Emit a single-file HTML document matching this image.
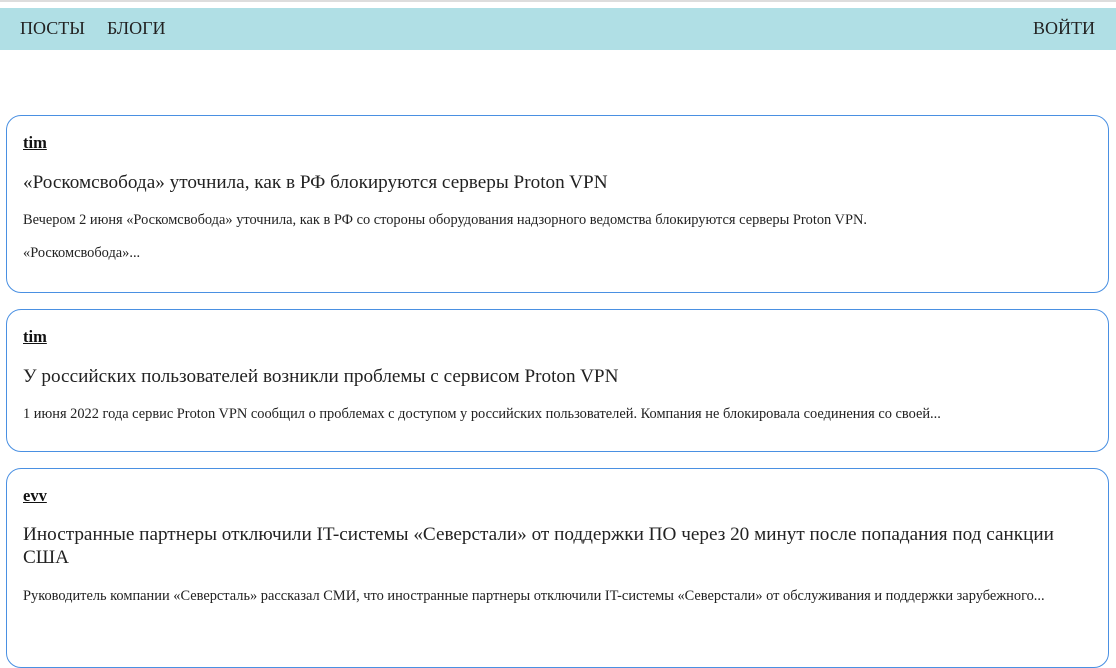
<!DOCTYPE html>
<html><head><meta charset="utf-8"><style>
html,body{margin:0;padding:0;background:#fff;width:1116px;height:626px;overflow:hidden;font-family:"Liberation Serif","Noto Serif CJK SC",serif;color:#222}
.top{position:absolute;left:0;top:0;width:1116px;height:2px;background:#ddd}
.nav{position:absolute;left:0;top:8px;width:1116px;height:42px;background:#b0dfe5}
.nav span{position:absolute;top:10px;font-size:18px;color:#222}
.card{position:absolute;left:6px;width:1103px;border:1px solid #4a90e2;border-radius:15px;box-sizing:border-box}
.card .u{position:absolute;left:16px;font-weight:bold;text-decoration:underline;font-size:16.5px;color:#111}
.card .t{position:absolute;left:16px;font-size:19.2px;line-height:23px;color:#222;width:1065px}
.card .b{position:absolute;left:16px;font-size:14.4px;color:#222}
</style></head><body>
<div class="top"></div>
<div class="nav"><span style="left:20px">ПОСТЫ</span><span style="left:107px">БЛОГИ</span><span style="left:1033px">ВОЙТИ</span></div>

<div class="card" style="top:115px;height:178px">
<div class="u" style="top:17px">tim</div>
<div class="t" style="top:55px">«Роскомсвобода» уточнила, как в РФ блокируются серверы Proton VPN</div>
<div class="b" style="top:96px">Вечером 2 июня «Роскомсвобода» уточнила, как в РФ со стороны оборудования надзорного ведомства блокируются серверы Proton VPN.</div>
<div class="b" style="top:129px">«Роскомсвобода»...</div>
</div>

<div class="card" style="top:309px;height:143px">
<div class="u" style="top:17px">tim</div>
<div class="t" style="top:55px">У российских пользователей возникли проблемы с сервисом Proton VPN</div>
<div class="b" style="top:96px">1 июня 2022 года сервис Proton VPN сообщил о проблемах с доступом у российских пользователей. Компания не блокировала соединения со своей...</div>
</div>

<div class="card" style="top:468px;height:200px">
<div class="u" style="top:17px">evv</div>
<div class="t" style="top:54px">Иностранные партнеры отключили IT-системы «Северстали» от поддержки ПО через 20 минут после попадания под санкции США</div>
<div class="b" style="top:119px">Руководитель компании «Северсталь» рассказал СМИ, что иностранные партнеры отключили IT-системы «Северстали» от обслуживания и поддержки зарубежного...</div>
</div>
</body></html>
